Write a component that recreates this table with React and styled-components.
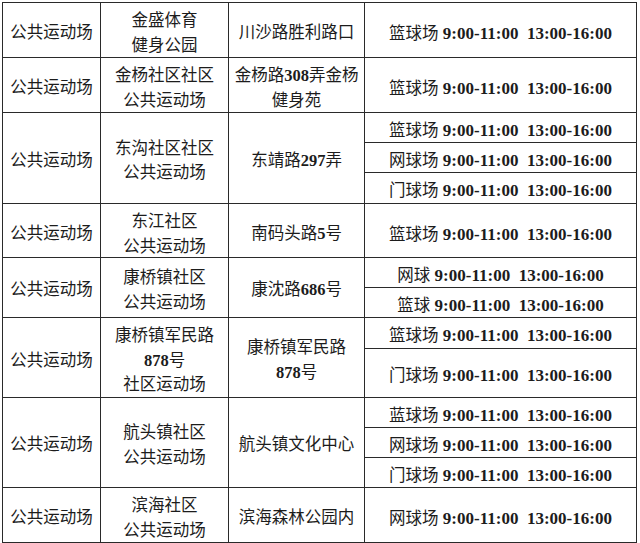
import styled, { createGlobalStyle } from "styled-components";

const GlobalStyle = createGlobalStyle`
  html, body {
    margin: 0;
    padding: 0;
    background: #fff;
  }
  body {
    font-family: "Liberation Serif", "Noto Sans CJK SC", serif;
    color: #1c1c1c;
  }
`;

const groups = [
  {
    height: 55,
    name: ["金盛体育", "健身公园"],
    addr: ["川沙路胜利路口"],
    slots: [{ court: "篮球场" }],
  },
  {
    height: 55,
    name: ["金杨社区社区", "公共运动场"],
    addr: ["金杨路308弄金杨", "健身苑"],
    slots: [{ court: "篮球场" }],
  },
  {
    height: 91,
    name: ["东沟社区社区", "公共运动场"],
    addr: ["东靖路297弄"],
    slots: [
      { court: "篮球场", height: 29 },
      { court: "网球场", height: 30 },
      { court: "门球场" },
    ],
  },
  {
    height: 54,
    name: ["东江社区", "公共运动场"],
    addr: ["南码头路5号"],
    slots: [{ court: "篮球场" }],
  },
  {
    height: 60,
    name: ["康桥镇社区", "公共运动场"],
    addr: ["康沈路686号"],
    slots: [{ court: "网球", height: 29 }, { court: "篮球" }],
  },
  {
    height: 80,
    name: ["康桥镇军民路", "878号", "社区运动场"],
    addr: ["康桥镇军民路", "878号"],
    slots: [{ court: "篮球场", height: 30 }, { court: "门球场" }],
  },
  {
    height: 90,
    name: ["航头镇社区", "公共运动场"],
    addr: ["航头镇文化中心"],
    slots: [
      { court: "蓝球场", height: 29 },
      { court: "网球场", height: 30 },
      { court: "门球场" },
    ],
  },
  {
    height: 55,
    name: ["滨海社区", "公共运动场"],
    addr: ["滨海森林公园内"],
    slots: [{ court: "网球场" }],
  },
];

// digits in bold serif, han characters regular
const withNumbers = (text) =>
  text.split(/(\d+)/).map((part, i) =>
    /^\d+$/.test(part) ? <Num key={i}>{part}</Num> : part
  );

const Lines = ({ lines }) =>
  lines.map((line, i) => <Line key={i}>{withNumbers(line)}</Line>);

const App = () => (
  <>
    <GlobalStyle />
    <Table>
      {groups.map((g, gi) => (
        <Group key={gi} $height={g.height}>
          <Cell>
            <Line>公共运动场</Line>
          </Cell>
          <Cell>
            <Lines lines={g.name} />
          </Cell>
          <Cell>
            <Lines lines={g.addr} />
          </Cell>
          <Slots>
            {g.slots.map((s, si) => (
              <Slot key={si} $height={s.height}>
                <span>{s.court}</span>
                <Time>{" 9:00-11:00  13:00-16:00"}</Time>
              </Slot>
            ))}
          </Slots>
        </Group>
      ))}
    </Table>
  </>
);

const Table = styled.div`
  box-sizing: border-box;
  width: 635px;
  margin: 2px 0 0 2px;
  border-top: 1px solid #2a2a2a;
  border-left: 1px solid #2a2a2a;
  font-size: 16.5px;
`;

const Group = styled.div`
  box-sizing: border-box;
  display: grid;
  grid-template-columns: 98px 128px 136px 272px;
  height: ${(p) => p.$height}px;
  border-bottom: 1px solid #2a2a2a;
`;

const Cell = styled.div`
  box-sizing: border-box;
  display: flex;
  flex-direction: column;
  align-items: center;
  justify-content: center;
  padding-top: 6px;
  border-right: 1px solid #2a2a2a;
  line-height: 24.5px;
  text-align: center;
`;

const Line = styled.div`
  white-space: nowrap;
`;

const Num = styled.span`
  font-weight: 700;
`;

const Slots = styled.div`
  box-sizing: border-box;
  display: flex;
  flex-direction: column;
  border-right: 1px solid #2a2a2a;
`;

const Slot = styled.div`
  box-sizing: border-box;
  display: flex;
  align-items: center;
  justify-content: center;
  padding-top: 6px;
  line-height: 20px;
  white-space: pre;
  ${(p) => (p.$height ? `height: ${p.$height}px;` : "flex: 1;")}
  & + & {
    border-top: 1px solid #2a2a2a;
  }
`;

const Time = styled.span`
  font-weight: 700;
  font-size: 17px;
`;

export default App;
